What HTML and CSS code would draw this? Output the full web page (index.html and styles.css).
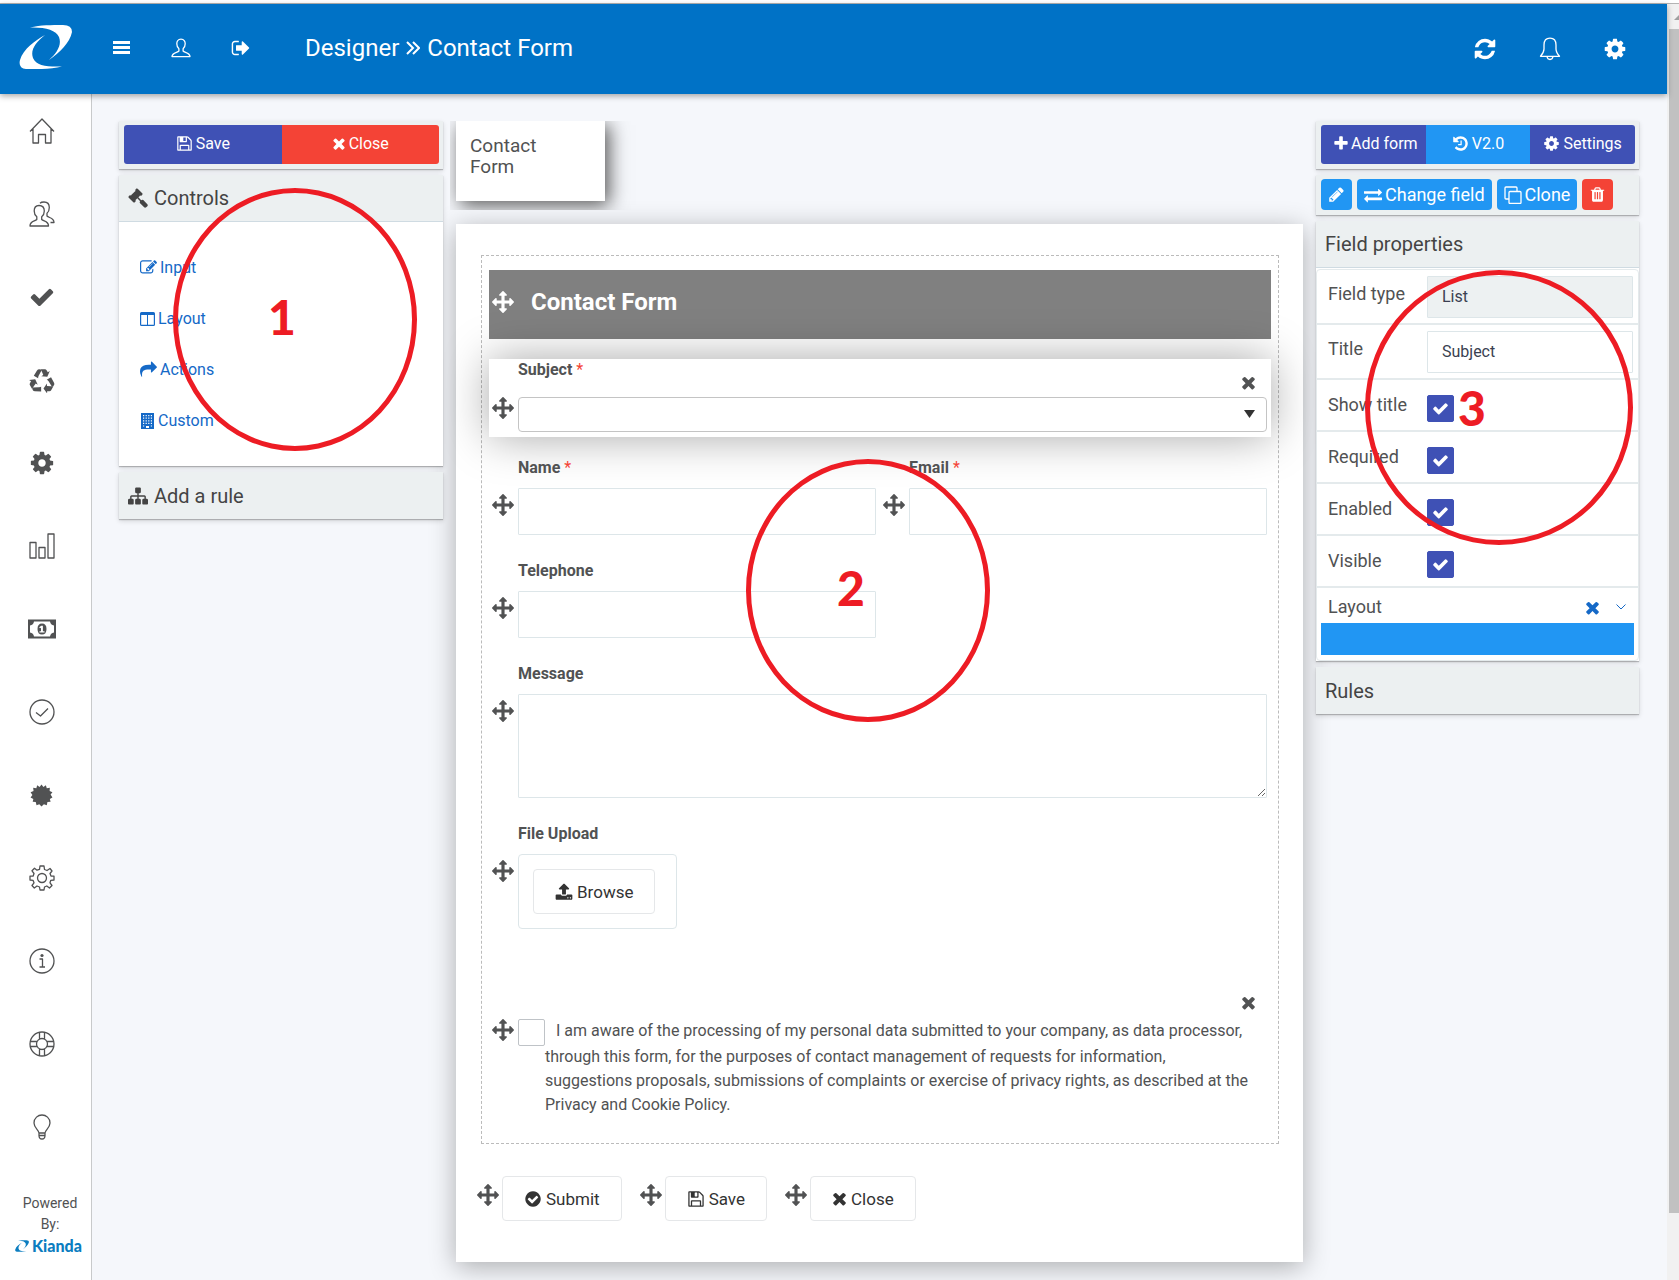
FILE: index.html
```html
<!DOCTYPE html>
<html lang="en">
<head>
<meta charset="utf-8">
<title>Designer - Contact Form</title>
<meta name="viewport" content="width=device-width, initial-scale=1">
<link rel="stylesheet" href="styles.css">
</head>
<body>
<svg class="sprite" aria-hidden="true">
  <symbol id="logo" viewBox="0 0 53 44"><path d="M11 2.500C22 0 32 0 44 0Q53 0 53 7C51 18 40 28 30 35C38 28 43 20 40 12C37 5 26 2 11 2.500ZM26 10C17 15 4 24 1 35Q-1 43 7 44C18 44.500 32 44 43 41.500C29 42 17 41 14 33C11 25 17 17 26 10Z"/></symbol>
  <symbol id="cog" viewBox="0 0 1792 1792"><path d="M1152 896q0-106-75-181t-181-75-181 75-75 181 75 181 181 75 181-75 75-181zm512-109v222q0 12-8 23t-20 13l-185 28q-19 54-39 91 35 50 107 138 10 12 10 25t-9 23q-27 37-99 108t-94 71q-12 0-26-9l-138-108q-44 23-91 38-16 136-29 186-7 28-36 28h-222q-14 0-24.500-8.500t-11.500-21.500l-28-184q-49-16-90-37l-141 107q-10 9-25 9-14 0-25-11-126-114-165-168-7-10-7-23 0-12 8-23 15-21 51-66.500t54-70.500q-27-50-41-99l-183-27q-13-2-21-12.500t-8-23.500v-222q0-12 8-23t19-13l186-28q14-46 39-92-40-57-107-138-10-12-10-24 0-10 9-23 26-36 98.500-107.500t94.500-71.500q13 0 26 10l138 107q44-23 91-38 16-136 29-186 7-28 36-28h222q14 0 24.500 8.500t11.500 21.500l28 184q49 16 90 37l142-107q9-9 24-9 13 0 25 10 129 119 165 170 7 8 7 22 0 12-8 23-15 21-51 66.500t-54 70.500q26 50 41 98l183 28q13 2 21 12.500t8 23.500z"/></symbol>
  <symbol id="times" viewBox="192 0 1408 1792"><path d="M1490 1322q0 40-28 68l-136 136q-28 28-68 28t-68-28l-294-294-294 294q-28 28-68 28t-68-28l-136-136q-28-28-28-68t28-68l294-294-294-294q-28-28-28-68t28-68l136-136q28-28 68-28t68 28l294 294 294-294q28-28 68-28t68 28l136 136q28 28 28 68t-28 68l-294 294 294 294q28 28 28 68z"/></symbol>
  <symbol id="check" viewBox="0 0 1792 1792"><path d="M1671 566q0 40-28 68l-724 724-136 136q-28 28-68 28t-68-28l-136-136-362-362q-28-28-28-68t28-68l136-136q28-28 68-28t68 28l294 295 656-657q28-28 68-28t68 28l136 136q28 28 28 68z"/></symbol>
  <symbol id="plus" viewBox="192 0 1408 1792"><path d="M1600 736v192q0 40-28 68t-68 28h-416v416q0 40-28 68t-68 28h-192q-40 0-68-28t-28-68v-416h-416q-40 0-68-28t-28-68v-192q0-40 28-68t68-28h416v-416q0-40 28-68t68-28h192q40 0 68 28t28 68v416h416q40 0 68 28t28 68z"/></symbol>
  <symbol id="move" viewBox="0 0 1792 1792"><path d="M1792 896q0 26-19 45l-256 256q-19 19-45 19t-45-19-19-45v-128h-384v384h128q26 0 45 19t19 45-19 45l-256 256q-19 19-45 19t-45-19l-256-256q-19-19-19-45t19-45 45-19h128v-384h-384v128q0 26-19 45t-45 19-45-19l-256-256q-19-19-19-45t19-45l256-256q19-19 45-19t45 19 19 45v128h384v-384h-128q-26 0-45-19t-19-45 19-45l256-256q19-19 45-19t45 19l256 256q19 19 19 45t-19 45-45 19h-128v384h384v-128q0-26 19-45t45-19 45 19l256 256q19 19 19 45z"/></symbol>
  <symbol id="bars" viewBox="0 0 17 13"><path d="M0 0h17v3H0zM0 5h17v3H0zM0 10h17v3H0z"/></symbol>
  <symbol id="raquo" viewBox="0 0 14 14"><path fill="none" stroke="currentColor" stroke-width="2" d="M1 1L7 7L1 13M7 1L13 7L7 13"/></symbol>
  <symbol id="signout" viewBox="0 0 1792 1792"><path d="M704 1440q0 4 1 20t.5 26.500-3 23.500-10 19.500-20.500 6.500h-320q-119 0-203.500-84.500t-84.500-203.500v-704q0-119 84.500-203.500t203.500-84.500h320q13 0 22.500 9.500t9.500 22.500q0 4 1 20t.5 26.500-3 23.500-10 19.500-20.500 6.500h-320q-66 0-113 47t-47 113v704q0 66 47 113t113 47h312l11.500 1 11.500 3 8 5.500 7 9 2 13.500zm928-544q0 26-19 45l-544 544q-19 19-45 19t-45-19-19-45v-288h-448q-26 0-45-19t-19-45v-384q0-26 19-45t45-19h448v-288q0-26 19-45t45-19 45 19l544 544q19 19 19 45z"/></symbol>
  <symbol id="refresh" viewBox="0 0 1792 1792"><path d="M1639 1056q0 5-1 7-64 268-268 434.500t-478 166.500q-146 0-282.500-55t-243.500-157l-129 129q-19 19-45 19t-45-19-19-45v-448q0-26 19-45t45-19h448q26 0 45 19t19 45-19 45l-137 137q71 66 161 102t187 36q134 0 250-65t186-179q11-17 53-117 8-23 30-23h192q13 0 22.500 9.500t9.500 22.500zm25-800v448q0 26-19 45t-45 19h-448q-26 0-45-19t-19-45 19-45l138-138q-148-137-349-137-134 0-250 65t-186 179q-11 17-53 117-8 23-30 23h-199q-13 0-22.500-9.500t-9.500-22.500v-7q65-268 270-434.500t480-166.500q146 0 284 55.500t245 156.500l130-129q19-19 45-19t45 19 19 45z"/></symbol>
  <symbol id="save" viewBox="0 0 1792 1792"><path d="M512 1536h768v-384h-768v384zm896 0h128v-896q0-14-10-38.500t-20-34.500l-281-281q-10-10-34-20t-39-10v416q0 40-28 68t-68 28h-576q-40 0-68-28t-28-68v-416h-128v1280h128v-416q0-40 28-68t68-28h832q40 0 68 28t28 68v416zm-384-928v-320q0-13-9.500-22.500t-22.500-9.500h-192q-13 0-22.500 9.500t-9.500 22.500v320q0 13 9.500 22.500t22.500 9.500h192q13 0 22.500-9.500t9.500-22.500zm640 32v928q0 40-28 68t-68 28h-1344q-40 0-68-28t-28-68v-1344q0-40 28-68t68-28h928q40 0 88 20t76 48l280 280q28 28 48 76t20 88z"/></symbol>
  <symbol id="check-circle" viewBox="0 0 1792 1792"><path d="M1412 734q0-28-18-46l-91-90q-19-19-45-19t-45 19l-408 407-226-226q-19-19-45-19t-45 19l-91 90q-18 18-18 46 0 27 18 45l362 362q19 19 45 19 27 0 46-19l543-543q18-18 18-45zm252 162q0 209-103 385.500t-279.500 279.500-385.500 103-385.500-103-279.500-279.500-103-385.500 103-385.500 279.500-279.500 385.500-103 385.500 103 279.500 279.500 103 385.500z"/></symbol>
  <symbol id="history" viewBox="0 0 1792 1792"><path d="M1664 896q0 156-61 298t-164 245-245 164-298 61q-172 0-327-72.500t-264-204.500q-7-10-6.500-22.500t8.500-20.500l137-138q10-9 25-9 16 2 23 12 73 95 179 147t225 52q104 0 198.500-40.500t163.500-109.500 109.500-163.500 40.500-198.500-40.500-198.500-109.500-163.500-163.500-109.500-198.500-40.500q-98 0-188 35.500t-160 101.500l137 138q31 30 14 69-17 40-59 40h-448q-26 0-45-19t-19-45v-448q0-42 40-59 39-17 69 14l130 129q107-101 244.500-156.500t284.500-55.500q156 0 298 61t245 164 164 245 61 298zm-640-288v448q0 14-9 23t-23 9h-320q-14 0-23-9t-9-23v-64q0-14 9-23t23-9h224v-352q0-14 9-23t23-9h64q14 0 23 9t9 23z"/></symbol>
  <symbol id="trash" viewBox="0 0 1792 1792"><path d="M704 1376v-704q0-14-9-23t-23-9h-64q-14 0-23 9t-9 23v704q0 14 9 23t23 9h64q14 0 23-9t9-23zm256 0v-704q0-14-9-23t-23-9h-64q-14 0-23 9t-9 23v704q0 14 9 23t23 9h64q14 0 23-9t9-23zm256 0v-704q0-14-9-23t-23-9h-64q-14 0-23 9t-9 23v704q0 14 9 23t23 9h64q14 0 23-9t9-23zm-544-992h448l-48-117q-7-9-17-11h-317q-10 2-17 11zm928 32v64q0 14-9 23t-23 9h-96v948q0 83-47 143.500t-113 60.500h-832q-66 0-113-58.500t-47-141.500v-952h-96q-14 0-23-9t-9-23v-64q0-14 9-23t23-9h309l70-167q15-37 54-63t79-26h320q40 0 79 26t54 63l70 167h309q14 0 23 9t9 23z"/></symbol>
  <symbol id="pencil" viewBox="0 0 1792 1792"><path d="M491 1536l91-91-235-235-91 91v107h128v128h107zm523-928q0-22-22-22-10 0-17 7l-542 542q-7 7-7 17 0 22 22 22 10 0 17-7l542-542q7-7 7-17zm-54-192l416 416-832 832h-416v-416zm683 96q0 53-37 90l-166 166-416-416 166-165q36-38 90-38 53 0 91 38l235 234q37 39 37 91z"/></symbol>
  <symbol id="exchange" viewBox="0 0 1792 1792"><path d="M1792 1184v192q0 13-9.500 22.500t-22.500 9.500h-1376v192q0 13-9.500 22.500t-22.500 9.500q-12 0-24-10l-319-320q-9-9-9-22 0-14 9-23l320-320q9-9 23-9 13 0 22.500 9.500t9.500 22.500v192h1376q13 0 22.500 9.500t9.500 22.500zm0-544q0 14-9 23l-320 320q-9 9-23 9-13 0-22.500-9.500t-9.500-22.500v-192h-1376q-13 0-22.500-9.500t-9.500-22.500v-192q0-13 9.500-22.500t22.500-9.500h1376v-192q0-14 9-23t23-9q12 0 24 10l319 319q9 9 9 23z"/></symbol>
  <symbol id="clone" viewBox="0 0 18 18"><path fill="none" stroke="currentColor" stroke-width="1.300" d="M6 5.500h10q1 0 1 1v10q0 1-1 1H6q-1 0-1-1v-10q0-1 1-1zM4.500 13H2q-1 0-1-1V2q0-1 1-1h10q1 0 1 1v3"/></symbol>
  <symbol id="columns" viewBox="0 0 15 14"><path fill-rule="evenodd" d="M1.500 0h12Q15 0 15 1.500v11q0 1.500-1.500 1.500h-12Q0 14 0 12.500v-11Q0 0 1.500 0zM1.200 3v9.800H7V3zM8 3v9.800h5.800V3z"/></symbol>
  <symbol id="share" viewBox="0 0 1792 1792"><path d="M1792 640q0 26-19 45l-512 512q-19 19-45 19t-45-19-19-45v-256h-224q-98 0-175.500 6t-154 21.500-133 42.500-105.500 69.500-80 101-48.500 138.500-17.500 181q0 55 5 123 0 6 2.500 23.500t2.500 26.500q0 15-8.500 25t-23.500 10q-16 0-28-17-7-9-13-22t-13.500-30-10.500-24q-127-285-127-451 0-199 53-333 162-403 875-403h224v-256q0-26 19-45t45-19 45 19l512 512q19 19 19 45z"/></symbol>
  <symbol id="upload" viewBox="0 0 1792 1792"><path d="M1344 1472q0-26-19-45t-45-19-45 19-19 45 19 45 45 19 45-19 19-45zm256 0q0-26-19-45t-45-19-45 19-19 45 19 45 45 19 45-19 19-45zm128-224v320q0 40-28 68t-68 28h-1472q-40 0-68-28t-28-68v-320q0-40 28-68t68-28h427q21 56 70.500 92t110.500 36h256q61 0 110.500-36t70.500-92h427q40 0 68 28t28 68zm-325-648q-17 40-59 40h-256v448q0 26-19 45t-45 19h-256q-26 0-45-19t-19-45v-448h-256q-42 0-59-40-17-39 14-69l448-448q18-19 45-19t45 19l448 448q31 30 14 69z"/></symbol>
  <symbol id="edit" viewBox="0 0 1792 1792"><path d="M888 1184l116-116-152-152-116 116v56h96v96h56zm440-720q-16-16-33 1l-350 350q-17 17-1 33t33-1l350-350q17-17 1-33zm80 594v190q0 119-84.500 203.500t-203.500 84.500h-832q-119 0-203.500-84.500t-84.500-203.500v-832q0-119 84.500-203.500t203.500-84.500h832q63 0 117 25 15 7 18 23 3 17-9 29l-49 49q-14 14-32 8-23-6-45-6h-832q-66 0-113 47t-47 113v832q0 66 47 113t113 47h832q66 0 113-47t47-113v-126q0-13 9-22l64-64q15-15 35-7t20 29zm-96-738l288 288-672 672h-288v-288zm444 132l-92 92-288-288 92-92q28-28 68-28t68 28l152 152q28 28 28 68t-28 68z"/></symbol>
  <symbol id="building" viewBox="0 0 13 16"><path fill-rule="evenodd" d="M0 0h13v16H0zM2 2v1.200h1.200V2zM4.600 2v1.200h1.200V2zM7.200 2v1.200h1.200V2zM9.800 2v1.200H11V2zM2 4.600v1.200h1.200V4.600zM4.600 4.600v1.200h1.200V4.600zM7.200 4.600v1.200h1.200V4.600zM9.800 4.600v1.200H11V4.600zM2 7.200v1.200h1.200V7.200zM4.600 7.200v1.200h1.200V7.200zM7.200 7.200v1.200h1.200V7.200zM9.800 7.200v1.200H11V7.200zM2 9.800V11h1.200V9.800zM4.600 9.800V11h1.200V9.800zM7.200 9.800V11h1.200V9.800zM9.800 9.800V11H11V9.800zM2 12.400v1.200h1.200v-1.200zM5 13v2h3v-2zM9.800 12.400v1.200H11v-1.200z"/></symbol>
  <symbol id="sitemap" viewBox="0 0 1792 1792"><path d="M1792 1248v320q0 40-28 68t-68 28h-320q-40 0-68-28t-28-68v-320q0-40 28-68t68-28h96v-192h-512v192h96q40 0 68 28t28 68v320q0 40-28 68t-68 28h-320q-40 0-68-28t-28-68v-320q0-40 28-68t68-28h96v-192h-512v192h96q40 0 68 28t28 68v320q0 40-28 68t-68 28h-320q-40 0-68-28t-28-68v-320q0-40 28-68t68-28h96v-192q0-52 38-90t90-38h512v-192h-96q-40 0-68-28t-28-68v-320q0-40 28-68t68-28h320q40 0 68 28t28 68v320q0 40-28 68t-68 28h-96v192h512q52 0 90 38t38 90v192h96q40 0 68 28t28 68z"/></symbol>
  <symbol id="gavel" viewBox="0 0 1792 1792"><path d="M1771 1536q0 53-37 90l-107 108q-39 37-91 37-53 0-90-37l-363-364q-38-36-38-90 0-53 43-96l-256-256-126 126q-14 14-34 14t-34-14q2 2 12.500 12t12.500 13 10 11.500 10 13.500 6 13.500 5.500 16.500 1.500 18q0 38-28 68-3 3-16.500 18t-19 20.500-18.500 16.500-22 15.500-22 9-26 4.500q-40 0-68-28l-408-408q-28-28-28-68 0-13 4.500-26t9-22 15.500-22 16.500-18.500 20.500-19 18-16.500q30-28 68-28 10 0 18 1.500t16.500 5.500 13.500 6 13.500 10 11.500 10 13 12.500 12 12.500q-14-14-14-34t14-34l348-348q14-14 34-14t34 14q-2-2-12.500-12t-12.500-13-10-11.500-10-13.500-6-13.500-5.500-16.500-1.500-18q0-38 28-68 3-3 16.500-18t19-20.500 18.500-16.500 22-15.500 22-9 26-4.500q40 0 68 28l408 408q28 28 28 68 0 13-4.500 26t-9 22-15.500 22-16.500 18.500-20.500 19-18 16.500q-30 28-68 28-10 0-18-1.500t-16.500-5.500-13.500-6-13.500-10-11.500-10-13-12.500-12-12.500q14 14 14 34t-14 34l-126 126 256 256q43-43 96-43 52 0 91 37l363 363q37 39 37 91z"/></symbol>
  <symbol id="recycle" viewBox="0 0 26 26">
    <g id="arm"><path d="M4.800 8.800L8 3.500Q8.800 2.200 10.300 2.200Q11.700 2.300 12.500 3.500L9.500 8.900Q8.900 11.200 9.200 11.300z"/><path d="M11.500 2.200H16Q17 2.200 17.600 3.200L18.800 5.200L20.800 4.100L18.300 9.700L12.300 9.200L14.300 8L12.800 4.500Z"/></g>
    <use href="#arm" transform="rotate(120 13 14.500)"/><use href="#arm" transform="rotate(240 13 14.500)"/>
  </symbol>
  <symbol id="user" viewBox="0 0 20 20"><path class="line" d="M10 1.200C7 1.200 5.800 3.300 5.800 5.800C5.800 8 6.600 9.600 7.900 10.700V13C6.500 14.600 1 14.500 1 18.600H19C19 14.500 13.500 14.600 12.100 13V10.700C13.400 9.600 14.200 8 14.200 5.800C14.200 3.300 13 1.200 10 1.200Z"/></symbol>
  <symbol id="bell" viewBox="0 0 22 24"><path class="line" d="M11 1.200C7 1.200 5 4 5 8V12C5 15 3.500 17 1.500 19.300H20.500C18.500 17 17 15 17 12V8C17 4 15 1.200 11 1.200ZM8 19.500Q8.500 22.500 11 22.500T14 19.500"/></symbol>
  <symbol id="home" viewBox="0 0 26 26"><path class="line" d="M1 13.500L13 1L25 13.500M4 11V25H9.500V16.500H16.500V25H22V11"/></symbol>
  <symbol id="users" viewBox="0 0 26 26"><path class="line" d="M10 4.500C6.500 4.500 5.200 7 5.200 10C5.200 12.500 6.200 14.500 7.800 15.800V18.500C6 20.500 1 20 1 25H19.500C19.500 20 14.500 20.500 12.700 18.500V15.800C14.300 14.500 15.300 12.500 15.300 10C15.300 7 13.500 4.500 10 4.500ZM11 2.200C12 1.200 13.500 1 15 1C18.500 1 20.300 3.500 20.300 6.500C20.300 9 19.500 11 18 12.200V15C19.500 17 25 16.500 25 21.500H21.500"/></symbol>
  <symbol id="chart" viewBox="0 0 26 26"><path class="line" d="M1 9.500H7V25H1ZM10 14.500H16V25H10ZM19 1H25V25H19Z"/></symbol>
  <symbol id="money" viewBox="0 0 28 19"><path fill-rule="evenodd" d="M0 0H28V19H0ZM6 2Q5.500 5.500 2 6V13Q5.500 13.500 6 17H22Q22.500 13.500 26 13V6Q22.500 5.500 22 2ZM14 4Q18.500 4 18.500 9.500T14 15T9.500 9.500T14 4ZM13.200 6.200L11.200 7.800L12 8.800L13 8.200V11.700H11.500V13H16.500V11.700H14.900V6.200Z"/></symbol>
  <symbol id="ok" viewBox="0 0 26 26"><path class="line" d="M13 1A12 12 0 1 1 13 25A12 12 0 1 1 13 1ZM7 13.500L11.500 17L19 9.500"/></symbol>
  <symbol id="burst" viewBox="0 0 24 24"><path d="M12 .5L14 3.200L16.600 1.300L17.500 4.500L20.700 4L20.500 7.200L23.400 8.600L21.500 11L23.400 14L20.700 15.600L21.500 18.500L18.200 18.900L17.500 22.200L14.500 21L12 23.500L9.700 21L6.800 22.200L6 18.900L2.800 18.500L3.500 15.600L.6 14L2.500 11.500L.6 8.600L3.700 7.200L3.300 4L6.600 4.500L7.500 1.300L10 3.200Z"/></symbol>
  <symbol id="gear" viewBox="0 0 26 26"><path class="line" d="M11 1H15L15.500 4.500L18 5.500L21 3.500L23 6L21 8.500L22 11L25 11.200V15L21.800 15.300L21 17.800L23 20.500L20.500 23L17.800 21L15.500 22L15 25H11L10.500 22L8 21L5.300 23L3 20.500L5 17.800L4 15.300L1 15V11.200L4.200 11L5 8.500L3 5.800L5.500 3.200L8 5.200L10.500 4.300ZM13 8.500A4.500 4.500 0 1 1 13 17.500A4.500 4.500 0 1 1 13 8.500Z"/></symbol>
  <symbol id="info" viewBox="0 0 26 26"><path class="line" d="M13 1A12 12 0 1 1 13 25A12 12 0 1 1 13 1ZM10.500 11H13.500V19M10.500 19H16"/><circle cx="13" cy="7.500" r="1.600"/></symbol>
  <symbol id="ring" viewBox="0 0 26 26"><path class="line" d="M13 1A12 12 0 1 1 13 25A12 12 0 1 1 13 1ZM13 7.500A5.500 5.500 0 1 1 13 18.500A5.500 5.500 0 1 1 13 7.500ZM10.500 1.500V8M15.500 1.500V8M10.500 18V24.500M15.500 18V24.500M1.500 10.500H8M1.500 15.500H8M18 10.500H24.500M18 15.500H24.500"/></symbol>
  <symbol id="bulb" viewBox="0 0 26 26"><path class="line" d="M10 21.500V19C10 16 5 14 5 9C5 4 9 1 13 1S21 4 21 9C21 14 16 16 16 19V21.500ZM10 19H16M10 21.500Q10 25 13 25T16 21.500"/></symbol>
  <symbol id="chevron" viewBox="0 0 10 6"><path fill="none" stroke="currentColor" d="M.5.500L5 5L9.500.500"/></symbol>
</svg>

<div class="edge"></div>
<div class="frame">
  <div class="app">
    <header class="topbar">
      <a class="brand" href="#" aria-label="Kianda"><svg class="logo"><use href="#logo"/></svg></a>
      <nav class="tools" aria-label="Account">
        <button class="tool" aria-label="Menu"><svg class="i17"><use href="#bars"/></svg></button>
        <button class="tool" aria-label="Profile"><svg class="i20"><use href="#user"/></svg></button>
        <button class="tool" aria-label="Sign out"><svg class="i20"><use href="#signout"/></svg></button>
      </nav>
      <h1 class="title">Designer <svg class="sep"><use href="#raquo"/></svg> Contact Form</h1>
      <div class="tools tools-end">
        <button class="tool" aria-label="Refresh"><svg class="i24"><use href="#refresh"/></svg></button>
        <button class="tool" aria-label="Notifications"><svg class="i24"><use href="#bell"/></svg></button>
        <button class="tool" aria-label="Settings"><svg class="i24"><use href="#cog"/></svg></button>
      </div>
    </header>

    <div class="body">
      <aside class="rail">
        <nav class="rail-nav" aria-label="Main">
          <a href="#" aria-label="Home"><svg class="i26"><use href="#home"/></svg></a>
          <a href="#" aria-label="Users"><svg class="i26"><use href="#users"/></svg></a>
          <a href="#" aria-label="Tasks"><svg class="i26"><use href="#check"/></svg></a>
          <a href="#" aria-label="Recycle"><svg class="i26"><use href="#recycle"/></svg></a>
          <a href="#" aria-label="Administration"><svg class="i26"><use href="#cog"/></svg></a>
          <a href="#" aria-label="Reports"><svg class="i26"><use href="#chart"/></svg></a>
          <a href="#" aria-label="Billing"><svg class="i28"><use href="#money"/></svg></a>
          <a href="#" aria-label="Approvals"><svg class="i26"><use href="#ok"/></svg></a>
          <a href="#" aria-label="Certificates"><svg class="i23"><use href="#burst"/></svg></a>
          <a href="#" aria-label="Preferences"><svg class="i26"><use href="#gear"/></svg></a>
          <a href="#" aria-label="Information"><svg class="i26"><use href="#info"/></svg></a>
          <a href="#" aria-label="Support"><svg class="i26"><use href="#ring"/></svg></a>
          <a href="#" aria-label="Ideas"><svg class="i26"><use href="#bulb"/></svg></a>
        </nav>
        <div class="powered">Powered By:<a class="powered-brand" href="#"><svg class="i14"><use href="#logo"/></svg>Kianda</a></div>
      </aside>

      <main class="workspace">
        <section class="column">
          <div class="panel pad">
            <div class="group">
              <button class="btn indigo"><svg class="i17"><use href="#save"/></svg>Save</button>
              <button class="btn red"><svg class="x17"><use href="#times"/></svg>Close</button>
            </div>
          </div>
          <div class="panel">
            <h2 class="panel-head ruled"><svg class="i20"><use href="#gavel"/></svg>Controls</h2>
            <ul class="links">
              <li><a href="#"><svg class="i17"><use href="#edit"/></svg>Input</a></li>
              <li><a href="#"><svg class="i15"><use href="#columns"/></svg>Layout</a></li>
              <li><a href="#"><svg class="i17"><use href="#share"/></svg>Actions</a></li>
              <li><a href="#"><svg class="i15"><use href="#building"/></svg>Custom</a></li>
            </ul>
          </div>
          <div class="panel">
            <h2 class="panel-head"><svg class="i20"><use href="#sitemap"/></svg>Add a rule</h2>
          </div>
          <div class="mark mark-1">1</div>
        </section>

        <section class="canvas">
          <div class="tabs"><button class="tab">Contact Form</button></div>
          <form class="sheet">
            <div class="zone">
              <div class="form-head"><svg class="i22"><use href="#move"/></svg><h2>Contact Form</h2></div>

              <div class="field selected">
                <label for="subject">Subject <span class="req">*</span></label>
                <button type="button" class="remove" aria-label="Remove field"><svg class="x18"><use href="#times"/></svg></button>
                <svg class="i22 handle"><use href="#move"/></svg>
                <div class="select"><select id="subject"><option></option></select></div>
              </div>
              <div class="pair">
                <div class="field">
                  <label for="name">Name <span class="req">*</span></label>
                  <svg class="i22 handle"><use href="#move"/></svg>
                  <input class="box" id="name" type="text">
                </div>
                <div class="field">
                  <label for="email">Email <span class="req">*</span></label>
                  <svg class="i22 handle"><use href="#move"/></svg>
                  <input class="box" id="email" type="email">
                </div>
              </div>
              <div class="pair">
                <div class="field">
                  <label for="phone">Telephone</label>
                  <svg class="i22 handle"><use href="#move"/></svg>
                  <input class="box" id="phone" type="tel">
                </div>
              </div>
              <div class="field">
                <label for="message">Message</label>
                <svg class="i22 handle"><use href="#move"/></svg>
                <textarea class="box area" id="message"></textarea>
              </div>
              <div class="field">
                <label for="browse">File Upload</label>
                <svg class="i22 handle"><use href="#move"/></svg>
                <div class="upload"><button type="button" class="plain" id="browse"><svg class="i18"><use href="#upload"/></svg>Browse</button></div>
              </div>
              <div class="consent">
                <button type="button" class="remove" aria-label="Remove field"><svg class="x18"><use href="#times"/></svg></button>
                <svg class="i22"><use href="#move"/></svg>
                <input class="tick" type="checkbox" id="agree">
                <label for="agree">I am aware of the processing of my personal data submitted to your company, as data processor, through this form, for the purposes of contact management of requests for information, suggestions proposals, submissions of complaints or exercise of privacy rights, as described at the Privacy and Cookie Policy.</label>
              </div>
            </div>
            <div class="actions">
              <div class="action"><svg class="i22"><use href="#move"/></svg><button type="button" class="plain"><svg class="i18"><use href="#check-circle"/></svg>Submit</button></div>
              <div class="action"><svg class="i22"><use href="#move"/></svg><button type="button" class="plain"><svg class="i18"><use href="#save"/></svg>Save</button></div>
              <div class="action"><svg class="i22"><use href="#move"/></svg><button type="button" class="plain"><svg class="x18"><use href="#times"/></svg>Close</button></div>
            </div>
          </form>
          <div class="mark mark-2">2</div>
        </section>

        <section class="column">
          <div class="panel pad">
            <div class="group">
              <button class="btn indigo"><svg class="x17"><use href="#plus"/></svg>Add form</button>
              <button class="btn blue"><svg class="i17"><use href="#history"/></svg>V2.0</button>
              <button class="btn indigo"><svg class="i17"><use href="#cog"/></svg>Settings</button>
            </div>
          </div>
          <div class="panel pad toolbar">
            <button class="small blue" aria-label="Edit"><svg class="i17"><use href="#pencil"/></svg></button>
            <button class="small blue"><svg class="i18"><use href="#exchange"/></svg>Change field</button>
            <button class="small blue"><svg class="i18"><use href="#clone"/></svg>Clone</button>
            <button class="small red" aria-label="Delete"><svg class="i17"><use href="#trash"/></svg></button>
          </div>
          <div class="panel">
            <h2 class="panel-head ruled">Field properties</h2>
            <div class="props">
              <div class="prop"><label for="ftype">Field type</label><input class="value" id="ftype" type="text" value="List" readonly></div>
              <div class="prop"><label for="ftitle">Title</label><input class="value" id="ftitle" type="text" value="Subject"></div>
              <div class="prop check"><label for="p1">Show title</label><span class="toggle"><input class="tick" id="p1" type="checkbox" checked><svg class="i17"><use href="#check"/></svg></span></div>
              <div class="prop check"><label for="p2">Required</label><span class="toggle"><input class="tick" id="p2" type="checkbox" checked><svg class="i17"><use href="#check"/></svg></span></div>
              <div class="prop check"><label for="p3">Enabled</label><span class="toggle"><input class="tick" id="p3" type="checkbox" checked><svg class="i17"><use href="#check"/></svg></span></div>
              <div class="prop check"><label for="p4">Visible</label><span class="toggle"><input class="tick" id="p4" type="checkbox" checked><svg class="i17"><use href="#check"/></svg></span></div>
              <div class="layout">
                <div class="layout-head"><span>Layout</span><button aria-label="Clear layout"><svg class="x18"><use href="#times"/></svg></button><button aria-label="Expand"><svg class="i10"><use href="#chevron"/></svg></button></div>
                <div class="layout-bar"></div>
              </div>
            </div>
          </div>
          <div class="panel"><h2 class="panel-head">Rules</h2></div>
          <div class="mark mark-3">3</div>
        </section>
      </main>
    </div>
  </div>
  <div class="scroll"><span class="scroll-up"></span><span class="scroll-thumb"></span></div>
</div>
</body>
</html>
```

FILE: styles.css
```css
* { box-sizing: border-box; }

body {
  margin: 0;
  min-height: 100vh;
  display: flex;
  flex-direction: column;
  font: 16px/24px Roboto, "Liberation Sans", sans-serif;
  color: #515253;
  background: #f5f7fb;
}

h1, h2, ul { margin: 0; padding: 0; font-weight: 400; }
a { color: inherit; text-decoration: none; }
button, input, select, textarea { font: inherit; color: inherit; margin: 0; }
button { border: 0; padding: 0; background: none; cursor: pointer; display: inline-flex; align-items: center; justify-content: center; }
svg { display: block; flex: none; fill: currentColor; }
.sprite { position: absolute; width: 0; height: 0; }
.line { fill: none; stroke: currentColor; stroke-width: 1.3; stroke-linejoin: round; }

.i10 { width: 10px; height: 6px; }
.i14 { width: 14px; height: 12px; }
.i15 { width: 15px; height: 16px; }
.i17 { width: 17px; height: 17px; }
.i18 { width: 18px; height: 18px; }
.i20 { width: 20px; height: 20px; }
.i22 { width: 22px; height: 22px; }
.i23 { width: 23px; height: 23px; }
.i24 { width: 24px; height: 24px; }
.i26 { width: 26px; height: 26px; }
.i28 { width: 28px; height: 20px; }
.x17 { width: 14px; height: 17px; }
.x18 { width: 15px; height: 19px; }

/* window chrome */
.edge { height: 4px; background: #fff; border-bottom: 1px solid #b4b4b4; }
.frame { flex: 1; display: grid; grid-template-columns: minmax(0, 1fr) 12px; }
.scroll { background: #f1f1f1; display: flex; flex-direction: column; padding: 11px 0 67px 2px; }
.scroll-up { height: 5px; margin: 0 0 9px 5px; background: #a0a0a0; clip-path: polygon(100% 0, 100% 100%, 0 100%); }
.scroll-thumb { flex: 1; background: #c1c1c1; }
.app { display: flex; flex-direction: column; }

/* top bar */
.topbar {
  position: relative;
  z-index: 2;
  display: flex;
  align-items: center;
  height: 90px;
  padding-right: 20px;
  color: #fff;
  background: #0072c6;
  box-shadow: 0 2px 6px rgba(0, 0, 0, .35);
}
.brand { width: 91px; padding: 0 0 4px 19px; }
.logo { width: 53px; height: 44px; }
.tools { display: flex; padding-bottom: 3px; }
.tool { width: 60px; height: 44px; }
.title { flex: 1; display: flex; align-items: center; gap: 7px; padding: 0 0 3px 34px; font-size: 24px; line-height: 32px; }
.sep { width: 14px; height: 14px; }
.tools-end { padding-bottom: 0; }
.tools-end .tool { width: 65px; }

.body { flex: 1; display: flex; }

/* icon rail */
.rail { width: 92px; background: #fff; border-right: 1px solid #c8cacb; }
.rail-nav { display: flex; flex-direction: column; gap: 43px; padding: 17px 8px 0 0; }
.rail-nav a { display: flex; align-items: center; justify-content: center; height: 40px; }
.powered { padding: 46px 6px 0 15px; font-size: 14px; line-height: 21px; text-align: center; }
.powered-brand { display: flex; align-items: center; gap: 3px; color: #0b7dc0; font: 900 16px/22px Lato, sans-serif; }

/* workspace */
.workspace {
  flex: 1;
  min-width: 0;
  display: grid;
  grid-template-columns: 324px minmax(0, 1fr) 323px;
  gap: 13px;
  align-items: start;
  padding: 27px 28px 14px 27px;
}
.column { position: relative; z-index: 1; display: flex; flex-direction: column; gap: 6px; }
.panel { background: #fff; box-shadow: 0 1px 1px rgba(0, 0, 0, .22), 0 2px 5px rgba(0, 0, 0, .14); }
.pad { padding: 4px 4px 5px 5px; background: #ecf0f1; }
.panel-head { display: flex; align-items: center; gap: 6px; height: 47px; padding: 0 9px; font-size: 20px; line-height: 24px; color: #444; background: #ecf0f1; }
.ruled { border-bottom: 1px solid #cfdbe2; }

.group { display: grid; grid-auto-flow: column; grid-auto-columns: minmax(0, 1fr); border-radius: 3px; overflow: hidden; }
.btn { gap: 3px; height: 39px; padding: 0 13px 2px; justify-content: safe center; white-space: nowrap; color: #fff; }
.indigo { background: #3f51b5; }
.blue { background: #2196f3; }
.red { background: #f44336; }

.links { list-style: none; padding: 20px 21px; color: #1569c7; }
.links a { display: flex; align-items: center; gap: 3px; height: 51px; }

.toolbar { display: flex; gap: 5px; }
.small { gap: 3px; height: 31px; padding: 0 7px; border-radius: 4px; color: #fff; font-size: 18px; white-space: nowrap; }

/* form canvas */
.canvas { position: relative; display: flex; flex-direction: column; gap: 14px; }
.tabs { overflow: hidden; margin-left: -6px; padding: 0 0 9px 6px; display: flex; }
.tab { width: 149px; height: 80px; padding: 0 60px 10px 14px; text-align: left; font-size: 19px; line-height: 21px; background: #fff; box-shadow: 4px 4px 18px #555; }
.sheet { padding: 31px 24px 41px 25px; background: #fff; box-shadow: 0 5px 25px rgba(0, 0, 0, .3); }
.zone { display: flex; flex-direction: column; gap: 20px; padding: 14px 7px 26px; border: 1px dashed #bbb; }
.form-head { display: flex; align-items: center; gap: 17px; height: 69px; padding: 0 3px 6px; color: #fff; background: #808080; }
.form-head h2 { font-size: 24px; line-height: 30px; font-weight: 700; }

.field { display: grid; grid-template-columns: 29px minmax(0, 1fr); padding: 0 4px 5px 0; }
.field label { grid-column: 2; line-height: 22px; font-weight: 700; margin-bottom: 9px; }
.req { color: #f44336; font-weight: 400; }
.handle { grid-column: 1; margin: 6px 0 0 3px; }
.pair { display: grid; grid-template-columns: 1fr 1fr; }
.box { width: 100%; height: 47px; border: 1px solid #dde6e9; border-radius: 1px; background: #fff; padding: 6px 14px; }
.area { height: 104px; display: block; resize: vertical; }
.selected { background: #fff; box-shadow: 0 0 45px rgba(0, 0, 0, .35); }
.selected label { grid-row: 1; margin-bottom: 16px; }
.remove { width: 22px; height: 22px; }
.selected .remove { grid-area: 1 / 2; justify-self: end; align-self: end; margin: 0 8px 4px 0; }
.selected .handle { grid-row: 2; margin-top: 0; }
.select { grid-area: 2 / 2; position: relative; }
.select select { width: 100%; height: 35px; display: block; appearance: none; background: #fff; border: 1px solid #c4c4c4; border-radius: 4px; }
.select::after { content: ""; position: absolute; right: 12px; top: 13px; width: 11px; height: 8px; background: #333; clip-path: polygon(0 0, 100% 0, 50% 100%); pointer-events: none; }

.upload { justify-self: start; padding: 14px 21px 14px 14px; border: 1px solid #dde6e9; border-radius: 4px; }
.plain { gap: 4px; height: 45px; padding: 0 21px; font-size: 17px; color: #333; background: #fff; border: 1px solid #e5e7e9; border-radius: 4px; }

.consent { display: grid; grid-template-columns: 29px 27px minmax(0, 1fr); margin-top: 37px; padding-right: 4px; }
.consent .remove { grid-column: 1 / -1; justify-self: end; margin: 0 8px 6px 0; }
.consent > svg { margin-left: 3px; }
.consent label { padding-right: 12px; }
.consent label::before { content: ""; display: inline-block; width: 11px; height: 26px; vertical-align: -9px; }
.tick { width: 27px; height: 27px; appearance: none; border: 1px solid #bfc3c7; border-radius: 2px; background: #fff; }
.tick:checked { border-color: #3f51b5; background: #3f51b5; }

.actions { display: flex; gap: 18px; margin-left: -4px; padding-top: 32px; }
.action { display: flex; gap: 3px; }
.action > svg { margin-top: 8px; }

/* field properties */
.props { margin-top: 1px; border: 1px solid #e4eaec; border-radius: 4px; }
.prop { display: grid; grid-template-columns: 99px minmax(0, 1fr); padding: 6px 5px 5px 11px; border-bottom: 2px solid #e4eaec; font-size: 18px; }
.prop label { padding-top: 6px; }
.value { width: 100%; height: 42px; padding: 0 14px 2px; font-size: 16px; color: #3a3f51; background: #fff; border: 1px solid #dde6e9; border-radius: 1px; }
.value:read-only { background: #edf1f2; }
.check { padding-top: 15px; padding-bottom: 8px; }
.check label { padding-top: 0; line-height: 20px; }
.toggle { display: grid; justify-self: start; place-items: center; color: #fff; }
.toggle > * { grid-area: 1 / 1; }
.toggle svg { z-index: 1; pointer-events: none; }
.layout { padding: 7px 4px 5px; }
.layout-head { display: flex; align-items: center; gap: 16px; height: 28px; padding: 0 8px 4px 7px; font-size: 18px; color: #1569c7; }
.layout-head span { flex: 1; color: #515253; }
.layout-bar { height: 32px; background: #2196f3; }

/* numbered call-outs over the page */
.mark {
  position: absolute;
  z-index: 3;
  display: flex;
  align-items: center;
  justify-content: center;
  border: 5px solid #ed1c24;
  border-radius: 50%;
  color: #ed1c24;
  font: 900 48px/48px Lato, sans-serif;
  pointer-events: none;
}
.mark-1 { left: 54px; top: 67px; width: 244px; height: 263px; padding: 0 26px 5px 0; }
.mark-2 { left: 290px; top: 338px; width: 244px; height: 263px; padding: 0 34px 5px 0; }
.mark-3 { right: 6px; top: 149px; width: 268px; height: 275px; padding: 0 54px 0 0; }
```
